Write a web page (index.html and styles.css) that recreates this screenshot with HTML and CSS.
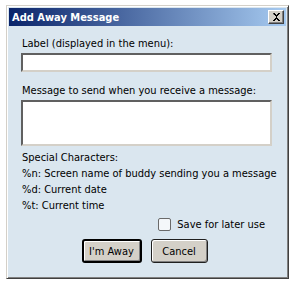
FILE: index.html
```html
<!DOCTYPE html>
<html>
<head>
<meta charset="utf-8">
<link rel="stylesheet" href="styles.css">
</head>
<body>
<div class="window">
  <div class="titlebar">
    <span class="title">Add Away Message</span>
    <span class="close"><svg width="9" height="8" viewBox="0 0 9 8"><path d="M1 0h2v1h1v1h1v-1h1v-1h2v1h-1v1h-1v1h-1v2h1v1h1v1h1v1h-2v-1h-1v-1h-1v1h-1v1h-2v-1h1v-1h1v-1h1v-2h-1v-1h-1z" fill="#000"/></svg></span>
  </div>
  <div class="content">
    <div class="label">Label (displayed in the menu):</div>
    <div class="field"></div>
    <div class="label second">Message to send when you receive a message:</div>
    <div class="field area"></div>
    <div class="specials">
      <div>Special Characters:</div>
      <div>%n: Screen name of buddy sending you a message</div>
      <div>%d: Current date</div>
      <div>%t: Current time</div>
    </div>
    <div class="saverow">
      <span class="check"></span>
      <span>Save for later use</span>
    </div>
    <div class="buttons">
      <span class="btn default">I'm Away</span>
      <span class="btn">Cancel</span>
    </div>
  </div>
</div>
</body>
</html>
```
FILE: styles.css
```css
html, body {
  margin: 0;
  padding: 0;
  background: #ffffff;
}
body {
  padding: 5px 0 0 6px;
  font-family: "DejaVu Sans Condensed", "DejaVu Sans", sans-serif;
  font-size: 11px;
  color: #000;
}
.window {
  width: 277px;
  height: 268px;
  border: 1px solid;
  border-color: #d4d0c8 #404040 #404040 #d4d0c8;
  box-shadow: inset 1px 1px 0 #ffffff, inset -1px -1px 0 #808080;
  padding: 2px;
  background: #dae6ef;
  display: flex;
  flex-direction: column;
}
.titlebar {
  height: 18px;
  background: linear-gradient(to right, #0a246a, #a6caf0);
  display: flex;
  align-items: center;
  justify-content: space-between;
  padding: 0 2px 0 3px;
}
.title {
  color: #fff;
  font-weight: bold;
  font-size: 11px;
  white-space: nowrap;
}
.close {
  width: 14px;
  height: 12px;
  background: #d4d0c8;
  border: 1px solid;
  border-color: #ffffff #404040 #404040 #ffffff;
  box-shadow: inset -1px -1px 0 #808080;
  display: flex;
  align-items: center;
  justify-content: center;
}
.content {
  flex: 1;
  padding: 11px 14px 0 12px;
  display: flex;
  flex-direction: column;
  white-space: nowrap;
}
.label {
  line-height: 13px;
  height: 13px;
  padding-left: 1px;
}
.label.second {
  margin-top: 12px;
}
.field {
  margin-top: 3px;
  height: 15px;
  background: #fff;
  border: 2px solid;
  border-color: #606060 #d4d0c8 #d4d0c8 #606060;
}
.field.area {
  height: 42px;
}
.specials {
  margin-top: 4px;
  display: flex;
  flex-direction: column;
}
.specials div {
  height: 16px;
  line-height: 16px;
  padding-left: 1px;
}
.saverow {
  margin-top: 3px;
  display: flex;
  align-items: center;
  justify-content: flex-end;
  padding-right: 7px;
  gap: 6px;
  height: 14px;
}
.check {
  width: 11px;
  height: 11px;
  border: 1px solid #6a6a6a;
  border-radius: 2px;
  background: #f4f7fa;
}
.buttons {
  margin-top: 8px;
  display: flex;
  justify-content: center;
  gap: 9px;
  padding-right: 4px;
}
.btn {
  width: 55px;
  height: 22px;
  border: 1px solid #202020;
  border-radius: 3px;
  background: #d4d0c8;
  box-shadow: inset 1px 1px 0 #fff, inset -1px -1px 0 #808080;
  display: flex;
  align-items: center;
  justify-content: center;
}
.btn.default {
  border: 2px solid #000;
  width: 56px;
  height: 20px;
}
```
